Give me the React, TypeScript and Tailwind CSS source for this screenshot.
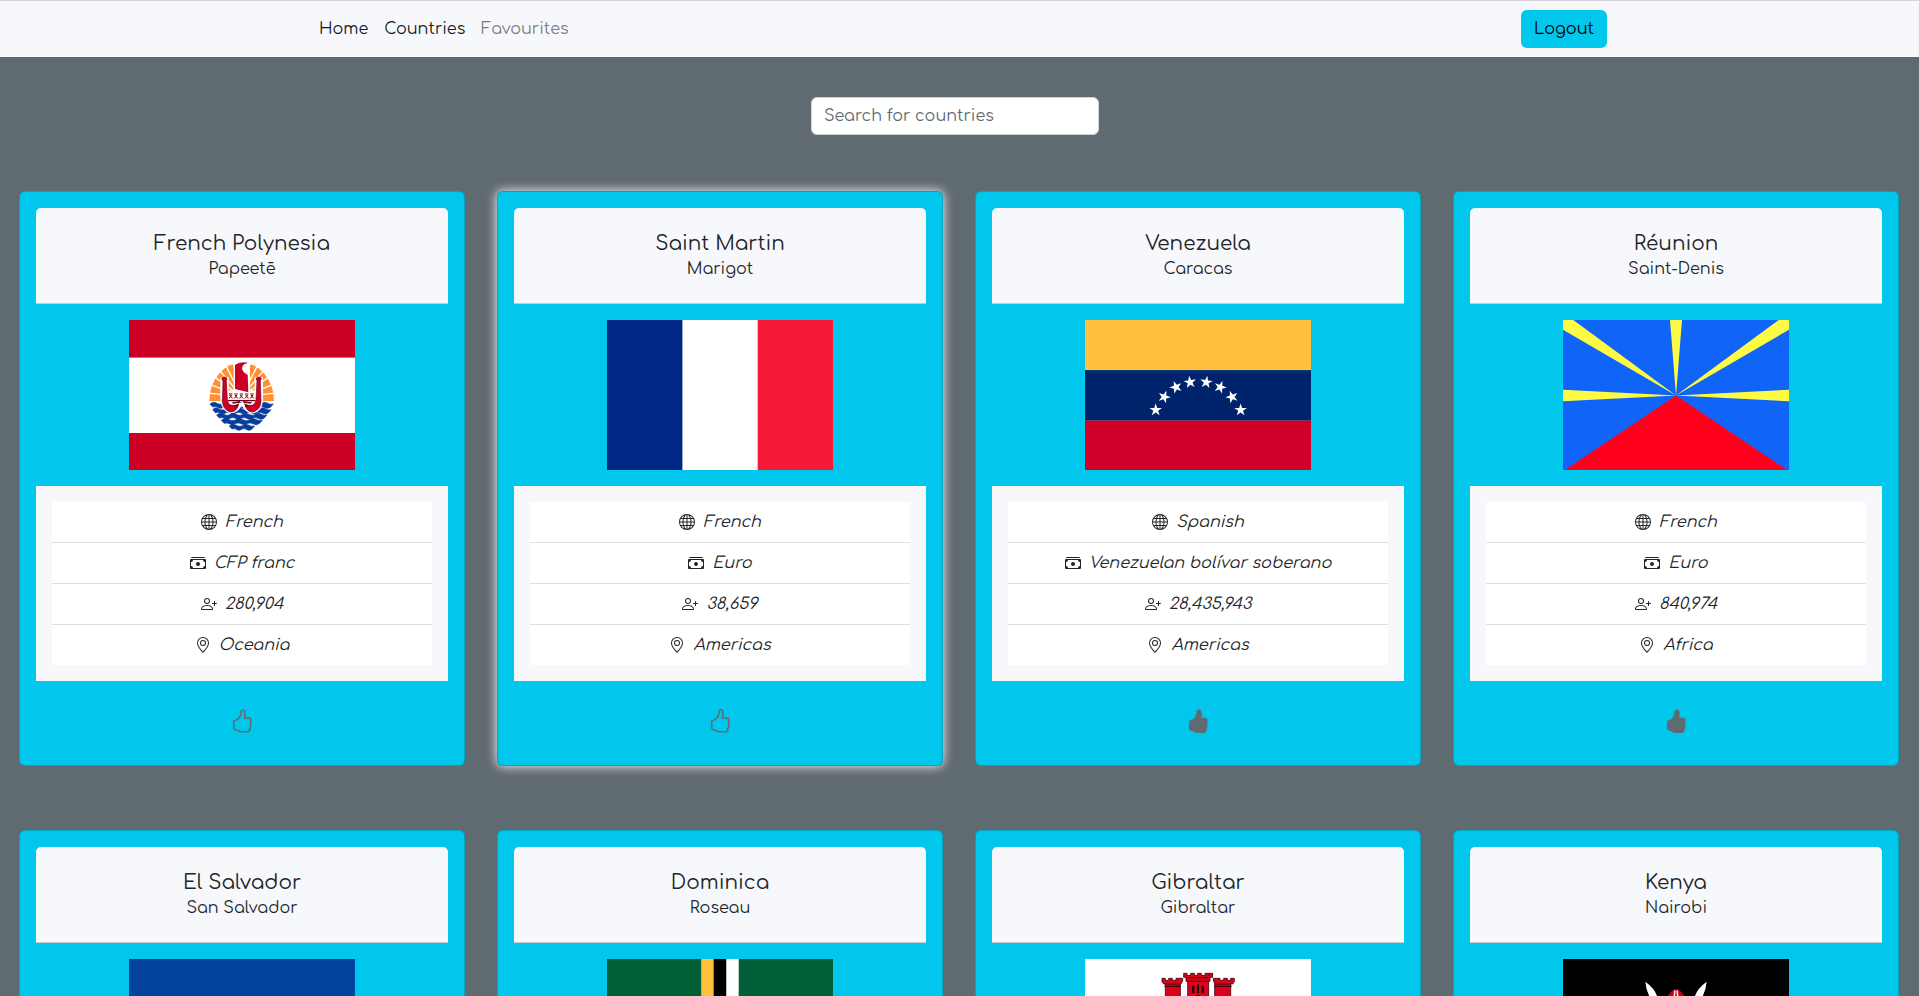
import React from "react";
import {
  BsGlobe,
  BsCashStack,
  BsPersonPlus,
  BsGeoAlt,
  BsHandThumbsUp,
  BsHandThumbsUpFill,
} from "react-icons/bs";

const FLAG = "block h-[150px] w-[226px] shrink-0";

function PolynesiaFlag() {
  const spokes = [-84, -69, -54, -40, -27, -14, 14, 27, 40, 54, 69, 84];
  const waves = [
    { y: 188, x0: 60, x1: 250 },
    { y: 205, x0: 68, x1: 243 },
    { y: 221, x0: 80, x1: 231 },
    { y: 237, x0: 94, x1: 217 },
    { y: 254, x0: 118, x1: 194 },
  ];
  return (
    <svg className={FLAG} viewBox="0 0 226 150">
      <rect width="226" height="150" fill="#fff" />
      <rect width="226" height="37.6" fill="#cc0025" />
      <rect y="113" width="226" height="37" fill="#cc0025" />
      <g transform="translate(61 20) scale(.33333)">
        <path d="M58 183a97 115 0 0 1 194 0z" fill="#ff9133" />
        {spokes.map((a) => (
          <path key={a} d="M155 170V55" stroke="#fff" strokeWidth="4" transform={`rotate(${a} 155 170)`} />
        ))}
        <path d="M115 150L195 150V190H115z" fill="#fff" opacity=".8" />
        <path d="M131 66H180V158H131z" fill="#fff" />
        {waves.map((w) => {
          const n = Math.max(2, Math.round((w.x1 - w.x0) / 38));
          const s = (w.x1 - w.x0) / n;
          let d = `M${w.x0} ${w.y + 4}`;
          for (let i = 0; i < n; i++) d += `q${s / 4} -9 ${s / 2} -3t${s / 2} 3`;
          d += `l-8 9`;
          for (let i = 0; i < n; i++) d += `q${-(s - 16 / n) / 4} 7 ${-(s - 16 / n) / 2} 2t${-(s - 16 / n) / 2} -2`;
          return <path key={w.y} d={d + "z"} fill="#083d9c" stroke="#083d9c" strokeWidth="2" />;
        })}
        <path
          d="M91 112H116V180Q120 192 145 188H165Q190 192 194 180V112H219V180Q216 217 188 220Q165 218 158 200H152Q146 218 122 220Q94 215 91 180z"
          fill="#fff"
        />
        <path
          d="M95 114L104 111L111 115L109 122L112 180Q115 196 127 196L144 197Q140 215 122 216Q99 211 97 184L99 124z M214 114L206 111L198 115L201 122L198 180Q195 196 183 196L166 197Q170 215 188 216Q211 211 213 184L211 124z"
          fill="#cc0025"
          stroke="#6d0019"
          strokeWidth="2"
        />
        <path d="M135 77Q145 66 172 69Q158 72 156 84Q157 97 173 104L175 157L135 147z" fill="#cc0025" />
        <path d="M135 77Q145 66 172 69" fill="none" stroke="#7b001c" strokeWidth="2" />
        {[122, 138, 154, 170, 186].map((x) => (
          <path key={x} d={`M${x - 5} 162H${x + 5}M${x - 3} 165L${x + 5} 175M${x + 3} 165L${x - 5} 175`} stroke="#6d0019" strokeWidth="3" />
        ))}
        <path d="M114 182H196M127 189L150 186M183 189L160 186" stroke="#6d0019" strokeWidth="4" />
        <path d="M130 197L148 190L143 202zM180 197L162 190L167 202z" fill="#6d0019" />
      </g>
    </svg>
  );
}

function SaintMartinFlag() {
  return (
    <svg className={FLAG} viewBox="0 0 226 150">
      <rect width="226" height="150" fill="#fff" />
      <rect width="75.4" height="150" fill="#002686" />
      <rect x="150.7" width="75.3" height="150" fill="#f51b36" />
    </svg>
  );
}

function VenezuelaFlag() {
  const stars = [
    [70.7, 90, 0],
    [79.2, 77, 20],
    [91, 67.2, -20],
    [105, 62.2, -8],
    [121.3, 62.2, 8],
    [135.2, 67.2, 20],
    [147, 77, -20],
    [155.6, 90, 0],
  ];
  return (
    <svg className={FLAG} viewBox="0 0 226 150">
      <rect width="226" height="50.2" fill="#ffc13c" />
      <rect y="50.2" width="226" height="50.2" fill="#00246b" />
      <rect y="100.4" width="226" height="49.6" fill="#d0002b" />
      {stars.map(([x, y, r]) => (
        <path
          key={x}
          transform={`translate(${x} ${y}) rotate(${r}) scale(6.6)`}
          d="M0-1L.225-.309H.951L.363.118L.588.809L0 .382L-.588.809L-.363.118L-.951-.309H-.225z"
          fill="#fff"
        />
      ))}
    </svg>
  );
}

function ReunionFlag() {
  return (
    <svg className={FLAG} viewBox="0 0 226 150">
      <rect width="226" height="150" fill="#1164f8" />
      <path
        d="M113 75.5L107 0H119zM113 75.5L0 9.7V0H10.3zM113 75.5L226 9.7V0H215.7zM113 75.5L0 69.7V81.2zM113 75.5L226 69.7V81.2z"
        fill="#fffb45"
      />
      <path d="M113 75.5L1.8 150H224.2z" fill="#ff001c" />
    </svg>
  );
}

function SalvadorFlag() {
  return (
    <svg className={FLAG} viewBox="0 0 226 150">
      <rect width="226" height="150" fill="#00429c" />
      <rect y="50" width="226" height="50" fill="#fff" />
    </svg>
  );
}

function DominicaFlag() {
  return (
    <svg className={FLAG} viewBox="0 0 226 150">
      <rect width="226" height="150" fill="#005f36" />
      <rect x="94.2" width="12.6" height="150" fill="#ffc13c" />
      <rect x="106.8" width="12.5" height="150" fill="#000" />
      <rect x="119.3" width="12.4" height="150" fill="#fff" />
    </svg>
  );
}

function GibraltarFlag() {
  return (
    <svg className={FLAG} viewBox="0 0 226 150">
      <rect width="226" height="150" fill="#fff" />
      <g transform="scale(.33333)" fill="#df0019" stroke="#3d0a10" strokeWidth="2.5">
        <path d="M241 74H286V140H241z M389 74H437V140H389z M308 66H371V140H308z" />
        <path d="M231 58H241V64H251V58H262V64H273V58H293V65L288 75H236L231 68z" />
        <path d="M385 65V58H405V64H416V58H427V64H437V58H448V68L443 75H390z" />
        <path d="M296 43H306V49H317V43H328V49H338V43H349V49H360V43H371V49H372V43H383V55H375V67H303V55H296z" />
        <path d="M303 56H375M238 82H288M388 82H440" strokeWidth="4" />
        <path
          d="M321 81H328V103H321zM336 76H342V103H336zM350 81H357V103H350zM333 112V108H345V112z"
          fill="#1b0508"
          stroke="none"
        />
      </g>
    </svg>
  );
}

function KenyaFlag() {
  return (
    <svg className={FLAG} viewBox="0 0 226 150">
      <rect width="226" height="150" fill="#000" />
      <g transform="scale(.33333)">
        <path d="M247 68Q278 90 284 118L296 140H278Q250 108 247 68zM431 68Q400 90 394 118L382 140H400Q428 108 431 68z" fill="#fff" />
        <path d="M339 90Q358 94 370 124V150H308V124Q320 94 339 90z" fill="#bf0015" />
        <path d="M334 94L331 124H335L337 95zM344 94L347 124H343L341 95z" fill="#fff" stroke="#fff" />
      </g>
    </svg>
  );
}

type Country = {
  name: string;
  capital: string;
  flag: React.ReactNode;
  details?: [string, string, string, string];
  liked?: boolean;
  active?: boolean;
};

const countries: Country[] = [
  { name: "French Polynesia", capital: "Papeetē", flag: <PolynesiaFlag />, details: ["French", "CFP franc", "280,904", "Oceania"] },
  { name: "Saint Martin", capital: "Marigot", flag: <SaintMartinFlag />, details: ["French", "Euro", "38,659", "Americas"], active: true },
  { name: "Venezuela", capital: "Caracas", flag: <VenezuelaFlag />, details: ["Spanish", "Venezuelan bolívar soberano", "28,435,943", "Americas"], liked: true },
  { name: "Réunion", capital: "Saint-Denis", flag: <ReunionFlag />, details: ["French", "Euro", "840,974", "Africa"], liked: true },
  { name: "El Salvador", capital: "San Salvador", flag: <SalvadorFlag /> },
  { name: "Dominica", capital: "Roseau", flag: <DominicaFlag /> },
  { name: "Gibraltar", capital: "Gibraltar", flag: <GibraltarFlag /> },
  { name: "Kenya", capital: "Nairobi", flag: <KenyaFlag /> },
];

const rowIcons = [BsGlobe, BsCashStack, BsPersonPlus, BsGeoAlt];

function CountryCard({ country }: { country: Country }) {
  const { name, capital, flag, details, liked, active } = country;
  const Thumb = liked ? BsHandThumbsUpFill : BsHandThumbsUp;
  return (
    <article
      className={`flex h-[575px] flex-col items-center rounded-md border border-black/[.175] bg-[#00c7eb] bg-clip-border p-4 ${
        active ? "shadow-[0_0_11px_#fff]" : ""
      }`}
    >
      <header className="flex h-24 w-full flex-col items-center rounded-t-[5px] border-b border-[#c9cacd] bg-[#f7f8fb] pt-6">
        <h5 className="text-[20px] leading-6">{name}</h5>
        <p className="pt-px text-[16px] leading-6">{capital}</p>
      </header>
      <div className="pt-4">{flag}</div>
      {details && (
        <>
          <div className="mt-4 w-full bg-[#f7f8fb] p-4">
            <ul className="divide-y divide-[#dfdfdf] bg-white">
              {details.map((text, i) => {
                const Icon = rowIcons[i];
                return (
                  <li key={i} className="flex h-[41px] items-center justify-center gap-2 italic last:h-10">
                    <Icon className="size-4 shrink-0" />
                    <span>{text}</span>
                  </li>
                );
              })}
            </ul>
          </div>
          <div className="flex h-[68px] w-full justify-center pt-7">
            <Thumb className="size-6 text-[#606b71]" />
          </div>
        </>
      )}
    </article>
  );
}

export default function App() {
  return (
    <div className="h-screen w-full overflow-hidden bg-[#606b71] font-['Comfortaa','Lato',sans-serif] text-[16px] leading-6 text-[#212529]">
      <nav className="flex h-[57px] items-center justify-between border-t border-[#d5d6d9] bg-[#f7f8fb] pr-[312px] pl-[319px]">
        <div className="flex gap-4">
          <a className="text-[#17181a]">Home</a>
          <a className="text-[#17181a]">Countries</a>
          <a className="text-[#7c7d7f]">Favourites</a>
        </div>
        <button className="h-[38px] w-[86px] rounded-md bg-[#00c7eb] text-black">Logout</button>
      </nav>
      <div className="flex pt-10 pl-[811px]">
        <input
          className="h-[38px] w-[288px] rounded-md border border-[#ced4da] bg-white px-3 outline-none placeholder:text-[#606b71]"
          placeholder="Search for countries"
        />
      </div>
      <main className="grid grid-cols-4 gap-x-8 gap-y-16 pt-14 pr-5 pl-[19px]">
        {countries.map((c) => (
          <CountryCard key={c.name} country={c} />
        ))}
      </main>
    </div>
  );
}
